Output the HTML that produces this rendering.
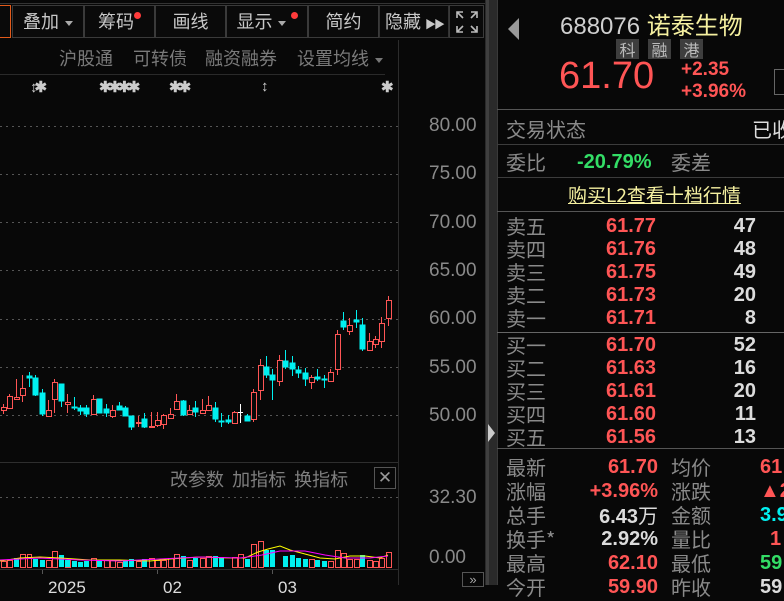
<!DOCTYPE html>
<html><head><meta charset="utf-8">
<style>
*{margin:0;padding:0;box-sizing:border-box}
html,body{width:784px;height:585px}
body{background:#080808;overflow:hidden;position:relative;font-family:"Liberation Sans","Noto Sans CJK SC",sans-serif;color:#8a8a8a}
.a{position:absolute;white-space:nowrap}
.btn{position:absolute;top:5px;height:33px;border:1px solid #3a3a3a;color:#c8c8c8;font-size:18px;line-height:31px;text-align:center;background:#0a0a0a}
.dot{display:inline-block;width:7px;height:7px;border-radius:50%;background:#ff3b3b;vertical-align:top;margin-top:6px}
.tri{display:inline-block;width:0;height:0;border-left:4px solid transparent;border-right:4px solid transparent;border-top:5px solid #aaa;vertical-align:middle;margin-left:6px}
.hl{position:absolute;height:1px;background:#3c3c3c}
.ax{position:absolute;left:429px;font-size:19px;color:#8a8a8a}
.cj{font-family:"Noto Sans CJK SC","Liberation Sans",sans-serif}
.lb{position:absolute;left:506px;font-size:20px;color:#8a8a8a;font-family:"Noto Sans CJK SC",sans-serif;line-height:22px}
.pr{position:absolute;left:606px;font-size:20px;color:#ff5555;font-weight:bold;line-height:22px}
.vo{position:absolute;right:28px;font-size:20px;color:#dcdcdc;font-weight:bold;line-height:22px;text-align:right}
.sv{position:absolute;right:126px;font-size:20px;font-weight:bold;line-height:22px;text-align:right}
.l2{position:absolute;left:671px;font-size:20px;color:#8a8a8a;font-family:"Noto Sans CJK SC",sans-serif;line-height:22px}
.v2{position:absolute;left:760px;font-size:20px;font-weight:bold;line-height:22px}
.mk{position:absolute;top:78px;font-size:15px;color:#ccc;font-weight:bold;letter-spacing:-3px}
</style></head><body>

<div class="hl" style="left:0;top:3px;width:490px;background:#333"></div>
<div class="btn" style="left:-2px;width:13px;border-color:#e25a1a"></div>
<div class="btn cj" style="left:12px;width:72px">叠加<span class="tri"></span></div>
<div class="btn cj" style="left:84px;width:71px">筹码<span class="dot"></span></div>
<div class="btn cj" style="left:155px;width:71px">画线</div>
<div class="btn cj" style="left:226px;width:82px">显示<span class="tri"></span> <span class="dot"></span></div>
<div class="btn cj" style="left:308px;width:71px">简约</div>
<div class="btn cj" style="left:379px;width:70px;border-color:#333">隐藏 <span style="font-size:11px;letter-spacing:-2px">▶▶</span></div>
<div class="btn" style="left:449px;width:35px;font-size:16px">
<svg width="24" height="24" viewBox="0 0 24 24" style="margin-top:4px" fill="none" stroke="#bbb" stroke-width="1.6"><path d="M2 8V2h6M16 2h6v6M22 16v6h-6M8 22H2v-6M2 2l6 6M22 2l-6 6M22 22l-6-6M2 22l6-6"/></svg></div>

<div class="a cj" style="left:59px;top:45px;font-size:18px;color:#7a7a7a">沪股通</div>
<div class="a cj" style="left:133px;top:45px;font-size:18px;color:#7a7a7a">可转债</div>
<div class="a cj" style="left:205px;top:45px;font-size:18px;color:#7a7a7a">融资融券</div>
<div class="a cj" style="left:297px;top:45px;font-size:18px;color:#7a7a7a">设置均线<span class="tri" style="border-top-color:#777"></span></div>
<div class="hl" style="left:0;top:74px;width:385px;background:#2a2a2a"></div>
<div class="mk" style="left:30px">↕✱</div>
<div class="mk" style="left:99px">✱✱✱✱</div>
<div class="mk" style="left:169px">✱✱</div>
<div class="mk" style="left:261px">↕</div>
<div class="mk" style="left:381px">✱</div>

<div style="position:absolute;left:398px;top:40px;width:1px;height:545px;background:#2c2c2c"></div>
<div style="position:absolute;left:485px;top:0;width:12px;height:585px;background:#2a2a2a"></div>
<div style="position:absolute;left:486px;top:0;width:3px;height:585px;background:#3f3f3f"></div>
<div class="a" style="left:488px;top:424px;width:0;height:0;border-top:9px solid transparent;border-bottom:9px solid transparent;border-left:7px solid #ccc"></div>

<div class="ax" style="top:115px">80.00</div>
<div class="ax" style="top:163px">75.00</div>
<div class="ax" style="top:212px">70.00</div>
<div class="ax" style="top:260px">65.00</div>
<div class="ax" style="top:308px">60.00</div>
<div class="ax" style="top:357px">55.00</div>
<div class="ax" style="top:405px">50.00</div>

<svg class="a" style="left:0;top:0" width="400" height="585">
<g stroke="#555" stroke-dasharray="2 4" stroke-width="1">
<path d="M0 126.5H402M0 174.5H402M0 222.5H402M0 270.5H402M0 319.5H402M0 367.5H402M0 415.5H402M0 497.5H402"/>
</g>
<g stroke-width="1">
<g stroke="#ff5555" fill="#080808">
<path d="M3.5 404V414M9.5 394V409M16.5 379V399M22.5 375V402M48.5 400V417M54.5 379V413M67.5 394V413M93.5 395V415M112.5 405V418M138.5 416V427M151.5 412V427M157.5 412V427M163.5 414V429M170.5 408V418M176.5 394V409M189.5 405V415M202.5 399V414M208.5 396V410M234.5 411V424M253.5 389V422M260.5 359V400M279.5 355V386M311.5 375V389M330.5 369V381M337.5 330V375M349.5 318V335M369.5 333V350M375.5 336V348M381.5 317V348M388.5 296V326"/>
<rect x="1.5" y="407.5" width="5" height="3"/><rect x="7.5" y="396.5" width="5" height="12"/><rect x="14.5" y="397.5" width="5" height="2"/><rect x="20.5" y="388.5" width="5" height="7"/><rect x="46.5" y="410.5" width="5" height="6"/><rect x="52.5" y="382.5" width="5" height="17"/><rect x="65.5" y="402.5" width="5" height="2"/><rect x="91.5" y="399.5" width="5" height="15"/><rect x="110.5" y="410.5" width="5" height="6"/><rect x="136.5" y="422.5" width="5" height="1"/><rect x="149.5" y="426.5" width="5" height="1"/><rect x="155.5" y="420.5" width="5" height="5"/><rect x="161.5" y="415.5" width="5" height="9"/><rect x="168.5" y="414.5" width="5" height="4"/><rect x="174.5" y="401.5" width="5" height="8"/><rect x="187.5" y="410.5" width="5" height="4"/><rect x="200.5" y="410.5" width="5" height="3"/><rect x="206.5" y="405.5" width="5" height="5"/><rect x="232.5" y="412.5" width="5" height="11"/><rect x="251.5" y="392.5" width="5" height="27"/><rect x="258.5" y="365.5" width="5" height="25"/><rect x="277.5" y="360.5" width="5" height="21"/><rect x="309.5" y="377.5" width="5" height="5"/><rect x="328.5" y="372.5" width="5" height="9"/><rect x="335.5" y="334.5" width="5" height="35"/><rect x="347.5" y="325.5" width="5" height="6"/><rect x="367.5" y="341.5" width="5" height="9"/><rect x="373.5" y="339.5" width="5" height="5"/><rect x="379.5" y="323.5" width="5" height="18"/><rect x="386.5" y="300.5" width="5" height="18"/>
</g>
<g stroke="#00f0f0" fill="#00f0f0">
<path d="M29.5 372V387M35.5 375V396M42.5 389V416M61.5 384V407M74.5 397V410M80.5 405V415M86.5 405V417M99.5 399V413M106.5 404V417M119.5 402V410M125.5 406V416M131.5 416V430M144.5 413V428M183.5 400V416M195.5 401V417M215.5 402V422M221.5 413V427M228.5 415V424M247.5 414V421M266.5 356V378M272.5 369V400M285.5 350V369M292.5 356V376M298.5 366V378M305.5 368V386M317.5 369V381M324.5 375V388M343.5 312V330M356.5 310V328M362.5 318V351"/>
<rect x="27" y="376" width="5" height="2"/><rect x="33" y="378" width="5" height="17"/><rect x="40" y="393" width="5" height="21"/><rect x="59" y="384" width="5" height="17"/><rect x="72" y="407" width="5" height="1"/><rect x="78" y="408" width="5" height="3"/><rect x="84" y="408" width="5" height="6"/><rect x="97" y="399" width="5" height="14"/><rect x="104" y="409" width="5" height="4"/><rect x="117" y="406" width="5" height="4"/><rect x="123" y="408" width="5" height="8"/><rect x="129" y="416" width="5" height="11"/><rect x="142" y="419" width="5" height="8"/><rect x="181" y="401" width="5" height="14"/><rect x="193" y="408" width="5" height="4"/><rect x="213" y="408" width="5" height="11"/><rect x="219" y="421" width="5" height="1"/><rect x="226" y="420" width="5" height="2"/><rect x="245" y="416" width="5" height="5"/><rect x="264" y="367" width="5" height="8"/><rect x="270" y="375" width="5" height="5"/><rect x="283" y="361" width="5" height="6"/><rect x="290" y="363" width="5" height="6"/><rect x="296" y="370" width="5" height="3"/><rect x="303" y="373" width="5" height="6"/><rect x="315" y="377" width="5" height="2"/><rect x="322" y="379" width="5" height="1"/><rect x="341" y="321" width="5" height="6"/><rect x="354" y="320" width="5" height="2"/><rect x="360" y="325" width="5" height="24"/>
</g>
<path d="M240.5 404V423M238 412.5H243" stroke="#fff"/>
</g>

<g stroke-width="1">
<g fill="#080808" stroke="#ff5555">
<rect x="1.5" y="561.5" width="5" height="6"/><rect x="7.5" y="560.5" width="5" height="7"/><rect x="20.5" y="554.5" width="5" height="13"/><rect x="27.5" y="554.5" width="4" height="13"/><rect x="46.5" y="560.5" width="5" height="7"/><rect x="52.5" y="551.5" width="5" height="16"/><rect x="65.5" y="560.5" width="5" height="7"/><rect x="91.5" y="558.5" width="5" height="9"/><rect x="104.5" y="560.5" width="5" height="7"/><rect x="110.5" y="560.5" width="5" height="7"/><rect x="117.5" y="562.5" width="5" height="5"/><rect x="136.5" y="561.5" width="5" height="6"/><rect x="149.5" y="558.5" width="5" height="9"/><rect x="155.5" y="560.5" width="5" height="7"/><rect x="161.5" y="560.5" width="5" height="7"/><rect x="168.5" y="558.5" width="5" height="9"/><rect x="174.5" y="554.5" width="5" height="13"/><rect x="187.5" y="560.5" width="5" height="7"/><rect x="200.5" y="558.5" width="5" height="9"/><rect x="206.5" y="556.5" width="5" height="11"/><rect x="232.5" y="557.5" width="5" height="10"/><rect x="238.5" y="554.5" width="5" height="13"/><rect x="251.5" y="544.5" width="5" height="23"/><rect x="258.5" y="541.5" width="5" height="26"/><rect x="309.5" y="559.5" width="5" height="8"/><rect x="328.5" y="561.5" width="5" height="6"/><rect x="335.5" y="550.5" width="5" height="17"/><rect x="341.5" y="553.5" width="5" height="14"/><rect x="347.5" y="559.5" width="5" height="8"/><rect x="354.5" y="559.5" width="5" height="8"/><rect x="367.5" y="560.5" width="5" height="7"/><rect x="373.5" y="561.5" width="5" height="6"/><rect x="379.5" y="558.5" width="5" height="9"/><rect x="386.5" y="552.5" width="5" height="15"/>
</g>
<g fill="#00f0f0">
<rect x="14" y="558" width="5" height="9"/><rect x="33" y="559" width="5" height="8"/><rect x="40" y="560" width="5" height="7"/><rect x="59" y="555" width="5" height="12"/><rect x="65" y="560" width="5" height="7"/><rect x="72" y="561" width="5" height="6"/><rect x="78" y="562" width="5" height="5"/><rect x="84" y="561" width="5" height="6"/><rect x="97" y="560" width="5" height="7"/><rect x="123" y="560" width="5" height="7"/><rect x="129" y="559" width="5" height="8"/><rect x="142" y="559" width="5" height="8"/><rect x="181" y="556" width="5" height="11"/><rect x="193" y="558" width="5" height="9"/><rect x="213" y="556" width="5" height="11"/><rect x="219" y="557" width="5" height="10"/><rect x="245" y="559" width="5" height="8"/><rect x="264" y="550" width="5" height="17"/><rect x="270" y="550" width="5" height="17"/><rect x="283" y="556" width="5" height="11"/><rect x="290" y="555" width="5" height="12"/><rect x="296" y="558" width="5" height="9"/><rect x="303" y="559" width="5" height="8"/><rect x="315" y="560" width="5" height="7"/><rect x="322" y="561" width="5" height="6"/><rect x="360" y="555" width="5" height="12"/>
</g>
<polyline fill="none" stroke="#ffff00" points="0,561 20,558 40,557 60,558 90,560 120,560 150,561 170,559 200,557 230,558 245,558 258,552 268,549 280,546 290,550 305,554 320,558 335,559 350,556 365,556 380,558 388,555"/>
<polyline fill="none" stroke="#ff00ff" points="0,560 40,558 80,560 120,561 160,559 200,557 240,558 262,555 280,551 305,551 325,555 345,558 370,558 388,556"/>
<path d="M42.5 569V574M157.5 569V574M272.5 569V574" stroke="#555"/>
</g>
</svg>

<div class="hl" style="left:0;top:462px;width:398px;background:#2e2e2e"></div>
<div class="a cj" style="left:170px;top:466px;font-size:18px;color:#7f7f7f">改参数&nbsp;&nbsp;加指标&nbsp;&nbsp;换指标</div>
<div class="a" style="left:374px;top:467px;width:22px;height:22px;border:1px solid #555;color:#999;font-size:17px;line-height:20px;text-align:center">✕</div>
<div class="ax" style="top:487px">32.30</div>
<div class="ax" style="top:547px">0.00</div>
<div class="hl" style="left:0;top:569px;width:398px;background:#2e2e2e"></div>
<div class="a" style="left:48px;top:578px;font-size:17px;color:#ddd">2025</div>
<div class="a" style="left:163px;top:578px;font-size:17px;color:#ddd">02</div>
<div class="a" style="left:278px;top:578px;font-size:17px;color:#ddd">03</div>
<div class="a" style="left:462px;top:572px;width:22px;height:15px;border:1px solid #555;color:#aaa;font-size:13px;line-height:13px;text-align:center">»</div>

<div style="position:absolute;left:497px;top:0;width:1px;height:585px;background:#3a3a3a"></div>
<div class="a" style="left:508px;top:18px;width:0;height:0;border-top:11px solid transparent;border-bottom:11px solid transparent;border-right:11px solid #999"></div>
<div class="a" style="left:560px;top:6px;font-size:24px;color:#cfcfcf">688076 <span class="cj" style="color:#f5f0a0">诺泰生物</span></div>
<div class="a cj" style="left:616px;top:39px;width:23px;height:20px;background:#3e3e3e;color:#bbb;font-size:16px;line-height:20px;text-align:center">科</div>
<div class="a cj" style="left:648px;top:39px;width:23px;height:20px;background:#3e3e3e;color:#bbb;font-size:16px;line-height:20px;text-align:center">融</div>
<div class="a cj" style="left:680px;top:39px;width:23px;height:20px;background:#3e3e3e;color:#bbb;font-size:16px;line-height:20px;text-align:center">港</div>
<div class="a" style="left:559px;top:55px;font-size:38px;color:#ff5555">61.70</div>
<div class="a" style="left:681px;top:59px;font-size:19px;color:#ff5555;font-weight:bold;line-height:22px">+2.35<br>+3.96%</div>
<div class="a" style="left:774px;top:69px;width:14px;height:26px;border:1px solid #666"></div>
<div class="hl" style="left:497px;top:109px;width:287px;background:#555"></div>
<div class="lb" style="top:118px">交易状态</div>
<div class="a cj" style="left:752px;top:118px;font-size:20px;color:#ddd;line-height:22px">已收</div>
<div class="hl" style="left:497px;top:144px;width:287px"></div>
<div class="lb" style="top:151px">委比</div>
<div class="a" style="left:577px;top:151px;font-size:20px;color:#33dd66;font-weight:bold;line-height:22px">-20.79%</div>
<div class="l2" style="top:151px">委差</div>
<div class="hl" style="left:497px;top:177px;width:287px"></div>
<div class="a cj" style="left:568px;top:184px;font-size:19px;color:#f5f0a0;text-decoration:underline;line-height:22px">购买L2查看十档行情</div>
<div class="hl" style="left:497px;top:211px;width:287px;background:#555"></div>

<div class="lb" style="top:215px">卖五</div><div class="pr" style="top:215px">61.77</div><div class="vo" style="top:215px">47</div>
<div class="lb" style="top:238px">卖四</div><div class="pr" style="top:238px">61.76</div><div class="vo" style="top:238px">48</div>
<div class="lb" style="top:261px">卖三</div><div class="pr" style="top:261px">61.75</div><div class="vo" style="top:261px">49</div>
<div class="lb" style="top:284px">卖二</div><div class="pr" style="top:284px">61.73</div><div class="vo" style="top:284px">20</div>
<div class="lb" style="top:307px">卖一</div><div class="pr" style="top:307px">61.71</div><div class="vo" style="top:307px">8</div>
<div class="hl" style="left:497px;top:332px;width:287px;background:#666"></div>
<div class="lb" style="top:334px">买一</div><div class="pr" style="top:334px">61.70</div><div class="vo" style="top:334px">52</div>
<div class="lb" style="top:357px">买二</div><div class="pr" style="top:357px">61.63</div><div class="vo" style="top:357px">16</div>
<div class="lb" style="top:380px">买三</div><div class="pr" style="top:380px">61.61</div><div class="vo" style="top:380px">20</div>
<div class="lb" style="top:403px">买四</div><div class="pr" style="top:403px">61.60</div><div class="vo" style="top:403px">11</div>
<div class="lb" style="top:426px">买五</div><div class="pr" style="top:426px">61.56</div><div class="vo" style="top:426px">13</div>
<div class="hl" style="left:497px;top:448px;width:287px;background:#555"></div>

<div class="lb" style="top:456px">最新</div><div class="sv" style="top:456px;color:#ff5555">61.70</div><div class="l2" style="top:456px">均价</div><div class="v2" style="top:456px;color:#ff5555">61</div>
<div class="lb" style="top:480px">涨幅</div><div class="sv" style="top:480px;color:#ff5555">+3.96%</div><div class="l2" style="top:480px">涨跌</div><div class="v2" style="top:480px;color:#ff5555">▲2</div>
<div class="lb" style="top:504px">总手</div><div class="sv" style="top:504px;color:#dcdcdc">6.43<span class="cj" style="font-weight:normal">万</span></div><div class="l2" style="top:504px">金额</div><div class="v2" style="top:504px;color:#00f0f0">3.93</div>
<div class="lb" style="top:528px">换手*</div><div class="sv" style="top:528px;color:#dcdcdc">2.92%</div><div class="l2" style="top:528px">量比</div><div class="v2" style="top:528px;color:#ff5555;left:770px">1</div>
<div class="lb" style="top:552px">最高</div><div class="sv" style="top:552px;color:#ff5555">62.10</div><div class="l2" style="top:552px">最低</div><div class="v2" style="top:552px;color:#33dd66">59</div>
<div class="lb" style="top:576px">今开</div><div class="sv" style="top:576px;color:#ff5555">59.90</div><div class="l2" style="top:576px">昨收</div><div class="v2" style="top:576px;color:#dcdcdc">59</div>
</body></html>
